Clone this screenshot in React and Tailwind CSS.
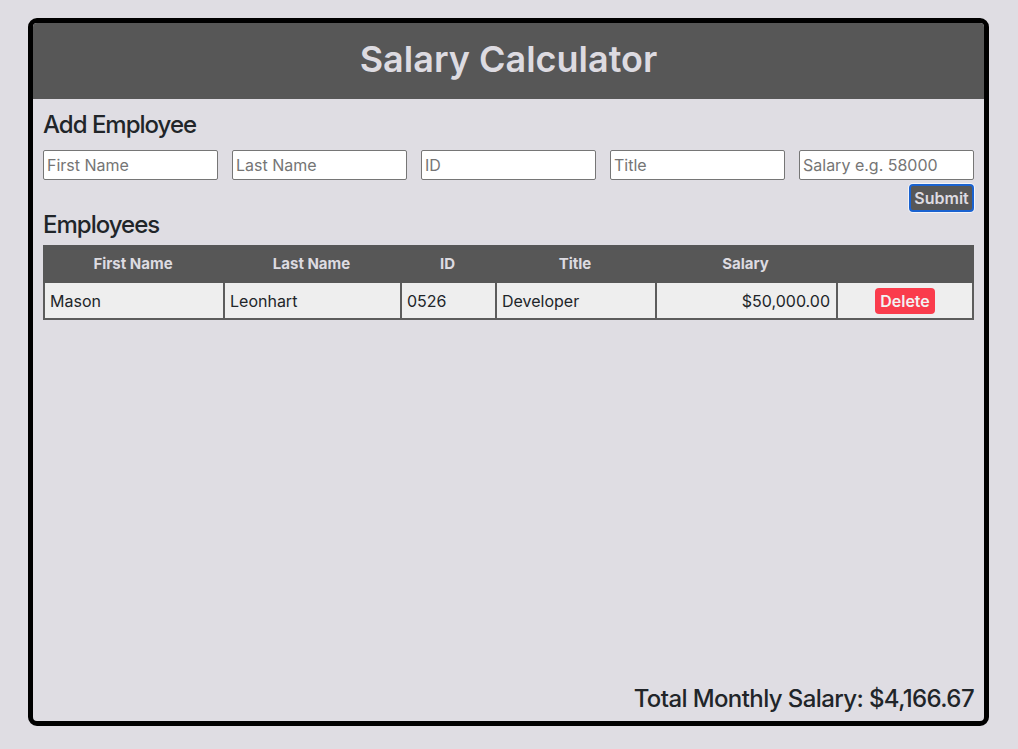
import React from "react";

const fields = ["First Name", "Last Name", "ID", "Title", "Salary e.g. 58000"];
const cols = [
  { label: "First Name", w: "w-[180px]" },
  { label: "Last Name", w: "w-[177px]" },
  { label: "ID", w: "w-[95px]" },
  { label: "Title", w: "w-[160px]" },
  { label: "Salary", w: "w-[181px]" },
  { label: "", w: "w-[138px]" },
];

export default function App() {
  return (
    <div
      className="w-[1018px] h-[749px] bg-[#dfdde3] pt-[18px] pl-[28px]"
      style={{ fontFamily: "Inter, 'Noto Sans', sans-serif" }}
    >
      <div className="w-[961px] h-[708px] border-[5px] border-black rounded-[9px] overflow-hidden flex flex-col bg-[#dfdde3] text-[#212529]">
        <div className="h-[76px] shrink-0 bg-[#575757] pt-[18px] text-center">
          <h1 className="text-[36px] leading-[36px] font-semibold text-[#dddbe1]">Salary Calculator</h1>
        </div>
        <div className="flex-1 flex flex-col px-[10px]">
          <h2 className="mt-[14px] text-[24px] leading-[24px] font-medium tracking-[-1px]">Add Employee</h2>
          <div className="mt-[13px] flex gap-[14px]">
            {fields.map((f) => (
              <input
                key={f}
                placeholder={f}
                className="w-[175px] h-[30px] bg-white border border-[#767676] rounded-[2px] px-[3px] text-[16px] placeholder:text-[#757575] outline-none"
              />
            ))}
          </div>
          <div className="mt-[4px] flex justify-end">
            <button className="w-[65px] h-[28px] bg-[#575757] text-[#dddbe1] text-[16px] font-semibold border-2 border-[#1a62d0] rounded-[4px] leading-none shadow-[0_0_0_1px_#f4f4f8]">
              Submit
            </button>
          </div>
          <h2 className="mt-[1px] text-[24px] leading-[24px] font-medium tracking-[-1px]">Employees</h2>
          <div className="mt-[8px] w-[931px]">
            <div className="flex h-[38px] bg-[#575757] text-[#dddbe1] text-[15px] font-bold">
              {cols.map((c, i) => (
                <div key={i} className={`${c.w} flex items-center justify-center`}>
                  {c.label}
                </div>
              ))}
            </div>
            <div className="flex h-[37px] bg-[#eeeeee] border-b-2 border-[#5c5c5c] text-[16px]">
              <div className="w-[180px] border-l-2 border-[#5c5c5c] flex items-center pl-[5px]">Mason</div>
              <div className="w-[177px] border-l-2 border-[#5c5c5c] flex items-center pl-[5px]">Leonhart</div>
              <div className="w-[95px] border-l-2 border-[#5c5c5c] flex items-center pl-[5px]">0526</div>
              <div className="w-[160px] border-l-2 border-[#5c5c5c] flex items-center pl-[5px]">Developer</div>
              <div className="w-[181px] border-l-2 border-[#5c5c5c] flex items-center justify-end pr-[6px]">$50,000.00</div>
              <div className="w-[138px] border-x-2 border-[#5c5c5c] flex items-center justify-center">
                <button className="w-[60px] h-[26px] bg-[#fa3c4c] text-[#f2f2f2] text-[16px] font-semibold rounded-[4px] leading-none">
                  Delete
                </button>
              </div>
            </div>
          </div>
          <div className="flex-1" />
          <div className="text-right text-[24px] leading-[24px] font-medium tracking-[-0.6px] mb-[10px]">
            Total Monthly Salary: $4,166.67
          </div>
        </div>
      </div>
    </div>
  );
}
